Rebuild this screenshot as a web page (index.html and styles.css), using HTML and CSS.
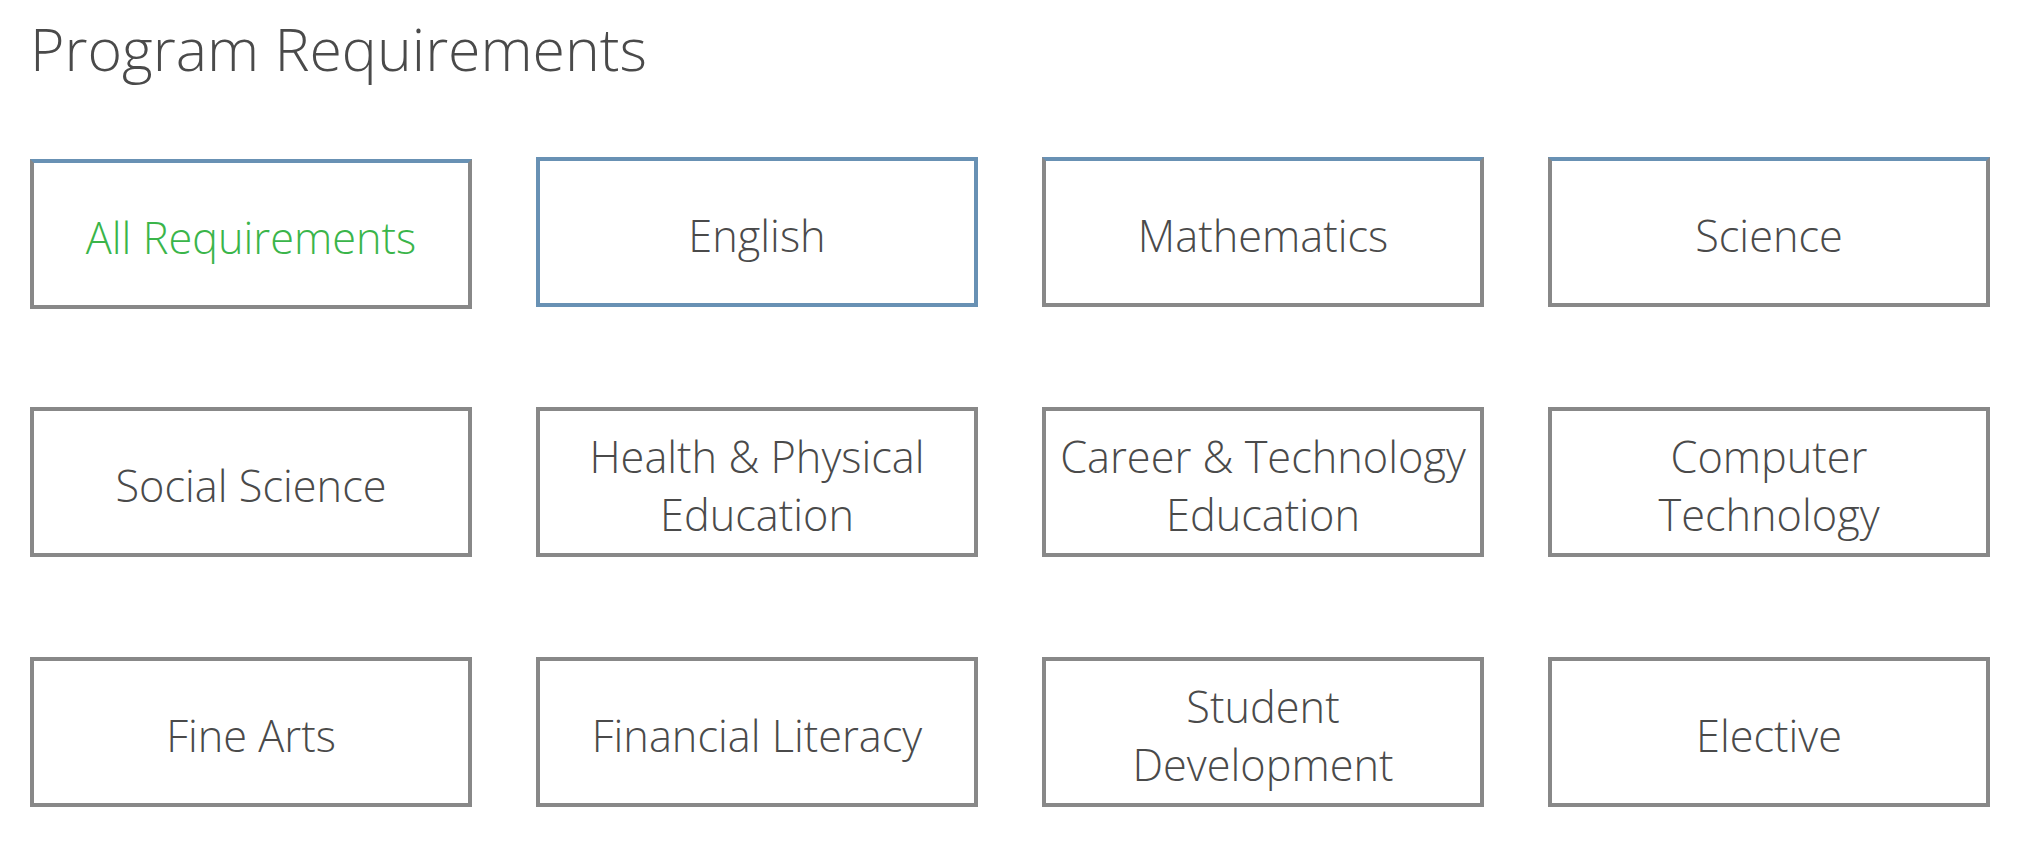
FILE: index.html
```html
<!DOCTYPE html>
<html lang="en">
<head>
<meta charset="utf-8">
<title>Program Requirements</title>
<link rel="stylesheet" href="styles.css">
</head>
<body>
<div class="page">
  <h1 class="title">Program Requirements</h1>
  <div class="grid">
    <a class="tile tile--active tile--top">All Requirements</a>
    <a class="tile tile--focus">English</a>
    <a class="tile tile--top">Mathematics</a>
    <a class="tile tile--top">Science</a>
    <a class="tile">Social Science</a>
    <a class="tile">Health &amp; Physical Education</a>
    <a class="tile">Career &amp; Technology Education</a>
    <a class="tile">Computer Technology</a>
    <a class="tile">Fine Arts</a>
    <a class="tile">Financial Literacy</a>
    <a class="tile">Student Development</a>
    <a class="tile">Elective</a>
  </div>
</div>
</body>
</html>
```
FILE: styles.css
```css
html, body {
  margin: 0;
  padding: 0;
  background: #ffffff;
}

body {
  font-family: "Open Sans", "Liberation Sans", sans-serif;
  font-weight: 300;
  color: #4a4a4a;
}

.page {
  padding: 7px 28px 0 30px;
}

.title {
  margin: 0;
  font-size: 59px;
  line-height: 82px;
  font-weight: 300;
  color: #4a4a4a;
}

.grid {
  margin-top: 68px;
  display: grid;
  grid-template-columns: repeat(4, 442px);
  grid-auto-rows: 150px;
  column-gap: 64px;
  row-gap: 100px;
}

.tile {
  box-sizing: border-box;
  height: 150px;
  border: 4px solid #888888;
  padding: 7px 10px 0;
  display: flex;
  align-items: center;
  justify-content: center;
  text-align: center;
  font-size: 43.3px;
  line-height: 58px;
  color: #4a4a4a;
  text-decoration: none;
  cursor: pointer;
}

.tile--top {
  border-top-color: #6891b4;
}

.tile--focus {
  border-color: #6891b4;
}

.tile--active {
  color: #3ab54a;
  margin: 2px 0 -2px;
}
```
